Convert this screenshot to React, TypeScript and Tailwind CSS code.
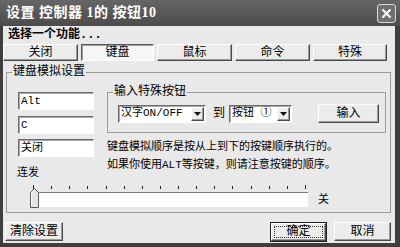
import type { ReactNode } from 'react'

const FONT = { fontFamily: '"Liberation Mono", "Noto Sans CJK SC", monospace' }
const TITLE_FONT = { fontFamily: '"Liberation Serif", "Noto Sans CJK SC", serif' }

const raised =
  'border border-t-white border-l-white border-b-[#4a4a4a] border-r-[#4a4a4a] bg-[#ececec] shadow-[inset_-1px_-1px_0_#9a9a9a]'
const sunken =
  'border border-t-[#6a6a6a] border-l-[#6a6a6a] border-b-white border-r-white bg-white shadow-[inset_1px_1px_0_#a8a8a8]'

function WinButton({ children, className }: { children: ReactNode; className: string }) {
  return (
    <div className={`${raised} flex items-center justify-center text-[12px] leading-none text-black ${className}`}>
      {children}
    </div>
  )
}

function Tab({ label, active, width }: { label: string; active?: boolean; width: string }) {
  if (active) {
    return (
      <div
        className={`${width} flex h-[17px] items-center justify-center border border-t-[#5a5a5a] border-l-[#5a5a5a] border-b-white border-r-white bg-[#f6f6f6] text-[12px] leading-none shadow-[inset_1px_1px_0_#a0a0a0]`}
      >
        {label}
      </div>
    )
  }
  return <WinButton className={`${width} h-[17px]`}>{label}</WinButton>
}

function Arrow() {
  return (
    <div className={`${raised} flex h-[14px] w-[13px] items-center justify-center`}>
      <svg width="7" height="4" viewBox="0 0 7 4">
        <polygon points="0,0 7,0 3.5,4" fill="#111" />
      </svg>
    </div>
  )
}

function Select({ value, width }: { value: string; width: string }) {
  return (
    <div className={`${sunken} ${width} flex h-[18px] items-center justify-between pl-[2px] pr-[1px]`}>
      <span className="text-[11px] leading-none">{value}</span>
      <Arrow />
    </div>
  )
}

function Field({ value, className }: { value: string; className?: string }) {
  return (
    <div className={`${sunken} flex h-[18px] w-[76px] items-center pl-[2px] text-[11px] leading-none ${className ?? ''}`}>
      {value}
    </div>
  )
}

function Ticks() {
  const ticks = Array.from({ length: 16 }, (_, i) => 5 + Math.round(i * 18.13))
  return (
    <svg width="282" height="5" viewBox="0 0 282 5" className="block">
      {ticks.map((x, i) => (
        <rect key={i} x={x} y={i === 0 || i === 15 ? 0 : 1} width="1" height={i === 0 || i === 15 ? 4 : 3} fill="#222" />
      ))}
    </svg>
  )
}

export default function App() {
  return (
    <div className="flex h-[247px] w-[400px] flex-col bg-[#3e3e3e] text-black" style={FONT}>
      {/* title bar */}
      <div className="flex h-[26px] items-center bg-linear-to-b from-[#666] to-[#4b4b4b] pl-[6px] pr-[4px]">
        <span className="text-[14px] font-bold leading-none tracking-[0.5px] text-white" style={TITLE_FONT}>
          设置 控制器 1的 按钮10
        </span>
        <div className="ml-auto flex h-[19px] w-[19px] items-center justify-center rounded-[3px] border border-[#d8d8d8] bg-[#707070]">
          <svg width="11" height="11" viewBox="0 0 11 11">
            <path d="M1.5 1.5 L9.5 9.5 M9.5 1.5 L1.5 9.5" stroke="#fff" strokeWidth="2" />
          </svg>
        </div>
      </div>

      {/* body */}
      <div className="mb-[4px] ml-[3px] mr-[5px] flex flex-1 flex-col bg-[#e9e9e9]">
        <div className="h-[18px] pl-[5px] text-[12px] font-bold leading-[18px]">选择一个功能...</div>

        <div className="flex gap-[3px]">
          <Tab label="关闭" width="w-[75px]" />
          <Tab label="键盘" width="w-[73px]" active />
          <Tab label="鼠标" width="w-[75px]" />
          <Tab label="命令" width="w-[75px]" />
          <Tab label="特殊" width="w-[74px]" />
        </div>

        <fieldset className="ml-[3px] mr-[4px] mt-[5px] border border-[#9a9a9a]">
          <legend className="ml-[5px] px-[1px] text-[12px] leading-[13px]">键盘模拟设置</legend>

          <div className="mt-[7px] flex pl-[11px]">
            <div className="flex w-[76px] flex-col pt-[6px]">
              <Field value="Alt" />
              <Field value="C" className="mt-[6px]" />
              <Field value="关闭" className="mt-[5px]" />
              <div className="-ml-[1px] mt-[9px] h-[14px] text-[11px] leading-[14px]">连发</div>
            </div>

            <div className="ml-[13px] flex w-[279px] flex-col">
              <fieldset className="border border-[#9a9a9a]">
                <legend className="ml-[5px] px-[1px] text-[12px] leading-[13px]">输入特殊按钮</legend>
                <div className="mt-[5px] flex items-center pb-[9px] pl-[10px]">
                  <Select value="汉字ON/OFF" width="w-[88px]" />
                  <span className="ml-[7px] text-[12px] leading-none">到</span>
                  <Select value="按钮 ①" width="w-[63px] ml-[4px]" />
                  <WinButton className="ml-[26px] h-[19px] w-[61px]">输入</WinButton>
                </div>
              </fieldset>
              <div className="mt-[5px] whitespace-nowrap text-[11px] leading-[18px]">
                键盘模拟顺序是按从上到下的按键顺序执行的。
              </div>
              <div className="whitespace-nowrap text-[11px] leading-[18px]">
                如果你使用ALT等按键，则请注意按键的顺序。
              </div>
            </div>
          </div>

          <div className="flex h-[32px] items-start">
            <div className="relative ml-[21px] w-[282px] pt-[5px]">
              <Ticks />
              <div className="ml-[8px] mt-[2px] h-[15px] w-[272px] border-l border-t border-l-[#7a7a7a] border-t-[#7a7a7a] bg-white" />
              <svg width="9" height="20" viewBox="0 0 9 20" className="absolute left-[2px] top-[8px]">
                <polygon points="0.5,4.5 4.5,0.5 8.5,4.5 8.5,19.5 0.5,19.5" fill="#e4e4e4" stroke="#5a5a5a" />
                <path d="M1.5 18.5 V5 L4.5 2" stroke="#fff" fill="none" />
              </svg>
            </div>
            <span className="ml-[8px] mt-[14px] text-[11px] leading-[13px]">关</span>
          </div>
        </fieldset>

        <div className="mt-[9px] flex items-start">
          <WinButton className="ml-[2px] h-[19px] w-[58px]">清除设置</WinButton>
          <div className="ml-auto flex h-[20px] w-[57px] border border-[#222]">
            <div className={`${raised} flex flex-1 items-center justify-center p-[2px]`}>
              <div className="flex h-full w-full items-center justify-center border border-dotted border-[#333] text-[12px] leading-none">
                确定
              </div>
            </div>
          </div>
          <WinButton className="ml-[7px] mr-[4px] h-[19px] w-[57px]">取消</WinButton>
        </div>
      </div>
    </div>
  )
}
